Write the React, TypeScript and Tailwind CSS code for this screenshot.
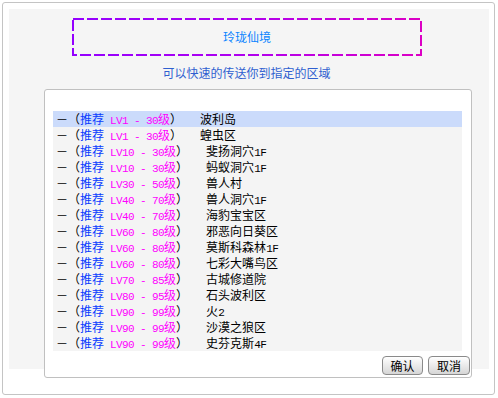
import React from "react";

const zones: [string, string, string][] = [
    ["LV1", "30", "波利岛"],
    ["LV1", "30", "蝗虫区"],
    ["LV10", "30", "斐扬洞穴1F"],
    ["LV10", "30", "蚂蚁洞穴1F"],
    ["LV30", "50", "兽人村"],
    ["LV40", "70", "兽人洞穴1F"],
    ["LV40", "70", "海豹宝宝区"],
    ["LV60", "80", "邪恶向日葵区"],
    ["LV60", "80", "莫斯科森林1F"],
    ["LV60", "80", "七彩大嘴鸟区"],
    ["LV70", "85", "古城修道院"],
    ["LV80", "95", "石头波利区"],
    ["LV90", "99", "火2"],
    ["LV90", "99", "沙漠之狼区"],
    ["LV90", "99", "史芬克斯4F"],
];

// ascii runs get a 6px-wide mono face, cjk stays 12px
function Mixed({ text }: { text: string }) {
    const parts = text.match(/[\x20-\x7e]+|[^\x20-\x7e]+/g) || [];
    return (
        <>
            {parts.map((p, i) =>
                /^[\x20-\x7e]/.test(p) ? (
                    <span key={i} className="font-['Liberation_Mono'] text-[11px] leading-[16px] tracking-[-0.6px]">
                        {p}
                    </span>
                ) : (
                    <span key={i}>{p}</span>
                )
            )}
        </>
    );
}

function Btn({ label, w }: { label: string; w: string }) {
    return (
        <button
            className={`${w} h-[19px] rounded-[4px] border border-[#8a8a8a] bg-gradient-to-b from-white to-[#d6d6d6] text-[12px] leading-[17px] text-black`}
        >
            {label}
        </button>
    );
}

export default function App() {
    return (
        <div className="font-['Noto_Sans_CJK_SC',sans-serif] bg-white w-[498px] h-[398px] pt-[2px] pl-[2px]">
            <div className="w-[493px] h-[393px] border border-[#c4c4c4] rounded-[3px] bg-white p-[6px]">
                <div className="w-[480px] h-[360px] bg-[#f5f5f5] pt-[9px]">
                    {/* title box */}
                    <div className="relative ml-[63px] w-[350px] h-[38px] flex items-center justify-center">
                        <svg className="absolute inset-0" width="350" height="38">
                            <defs>
                                <linearGradient id="dash" x1="0" y1="0" x2="1" y2="0">
                                    <stop offset="0" stopColor="#9400ff" />
                                    <stop offset="0.5" stopColor="#b000ee" />
                                    <stop offset="1" stopColor="#dc00c4" />
                                </linearGradient>
                            </defs>
                            <rect x="1" y="1" width="348" height="36" fill="none" stroke="url(#dash)" strokeWidth="2" strokeDasharray="11 3" />
                        </svg>
                        <span className="relative text-[12px] leading-[16px] text-[#0a84ff]">玲珑仙境</span>
                    </div>

                    <div className="w-[475px] mt-[9px] text-center text-[12px] leading-[16px] text-[#2f5fd0]">
                        可以快速的传送你到指定的区域
                    </div>

                    {/* list box */}
                    <div className="mt-[8px] ml-[35px] w-[428px] h-[289px] bg-white border border-[#c0c0c0] rounded-[3px] pt-[21px] pl-[8px] pr-[1px] flex flex-col">
                        <div className="w-[409px] bg-[#f4f4f4]">
                            {zones.map(([lv, top, name], i) => (
                                <div
                                    key={i}
                                    className={`h-[16px] pl-[3px] text-[12px] leading-[16px] whitespace-pre text-black ${i === 0 ? "bg-[#cbdbfb]" : ""}`}
                                >
                                    <span>－（</span>
                                    <span className="text-[#0a3cff]">推荐</span>
                                    <Mixed text=" " />
                                    <span className="text-[#ff00ff]">
                                        <Mixed text={`${lv} - ${top}级`} />
                                    </span>
                                    <span>）</span>
                                    <Mixed text={`   ${name}`} />
                                </div>
                            ))}
                        </div>
                        <div className="mt-[5px] flex justify-end gap-[5px]">
                            <Btn label="确认" w="w-[41px]" />
                            <Btn label="取消" w="w-[42px]" />
                        </div>
                    </div>
                </div>
            </div>
        </div>
    );
}
